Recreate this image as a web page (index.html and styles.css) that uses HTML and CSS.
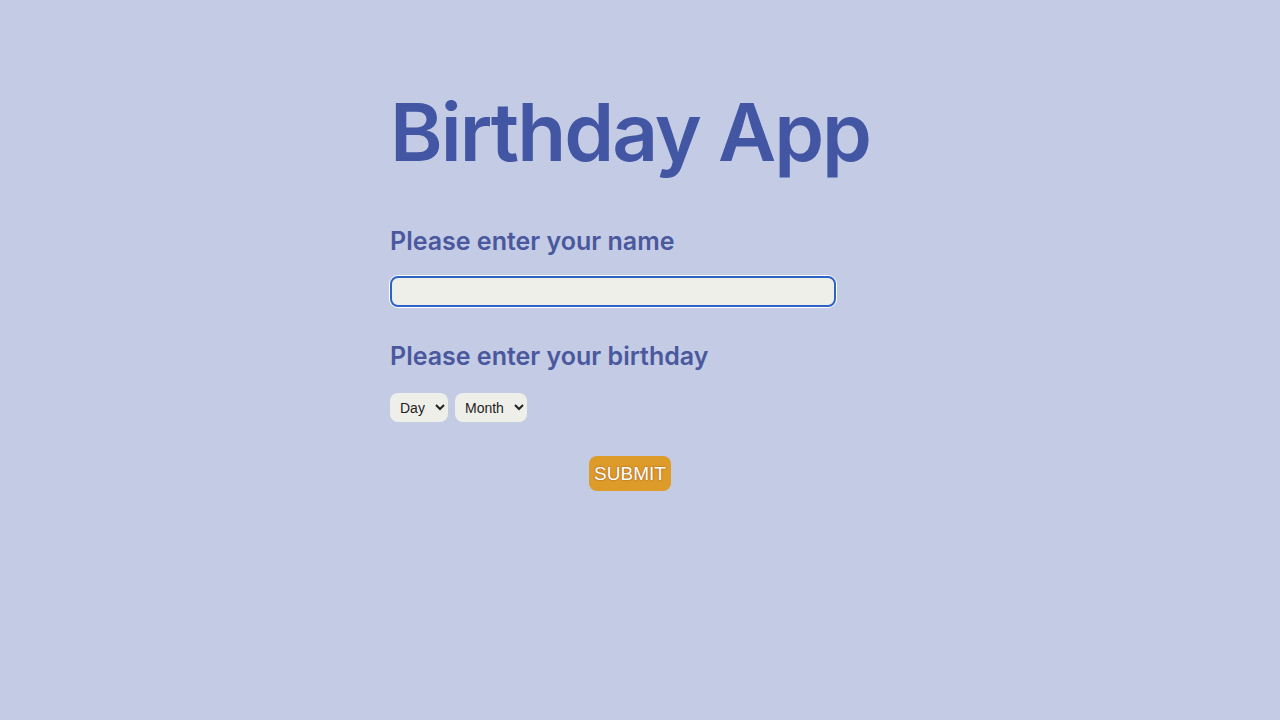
FILE: index.html
```html
<!DOCTYPE html>
<html lang="en">
<head>
<meta charset="utf-8">
<title>Birthday App</title>
<link rel="stylesheet" href="styles.css">
</head>
<body>
<main class="app">
  <h1 class="title">Birthday App</h1>
  <form class="form">
    <label class="label" for="name">Please enter your name</label>
    <input class="name-input" id="name" type="text" autofocus>
    <label class="label label-birthday">Please enter your birthday</label>
    <div class="selects">
      <select class="select"><option>Day</option></select>
      <select class="select"><option>Month</option></select>
    </div>
    <div class="actions">
      <button class="submit" type="button">SUBMIT</button>
    </div>
  </form>
</main>
</body>
</html>
```
FILE: styles.css
```css
html, body {
  margin: 0;
  padding: 0;
}
body {
  background: #c4cbe5;
  min-height: 720px;
  font-family: "Inter", "Noto Sans", sans-serif;
}
.app {
  width: 480px;
  margin: 0 auto;
  padding-top: 82px;
  position: relative;
  left: -10px;
}
.title {
  margin: 0 -20px;
  text-align: center;
  white-space: nowrap;
  font-size: 80px;
  font-weight: 600;
  color: #4356a3;
  line-height: 100px;
  letter-spacing: -2px;
}
.form {
  display: flex;
  flex-direction: column;
  align-items: flex-start;
  margin-top: 44px;
}
.label {
  font-size: 25px;
  font-weight: 600;
  color: #4a589d;
  line-height: 30px;
}
.name-input {
  margin-top: 20px;
  width: 446px;
  height: 31px;
  box-sizing: border-box;
  border: 2px solid #2d62c8;
  border-radius: 8px;
  background: #efefe9;
  box-shadow: 0 0 0 1px #ffffff;
  outline: none;
  font-size: 15px;
  padding: 0 5px;
  caret-color: #333;
}
.label-birthday {
  margin-top: 34px;
}
.selects {
  display: flex;
  gap: 7px;
  margin-top: 22px;
}
.select {
  height: 29px;
  border: none;
  border-radius: 8px;
  background: #efefe9;
  font-family: "Liberation Sans", Arial, sans-serif;
  font-size: 14px;
  color: #222;
  padding: 0 7px 0 6px;
}
.actions {
  align-self: stretch;
  display: flex;
  justify-content: center;
  margin-top: 34px;
}
.submit {
  height: 35px;
  padding: 0 5px;
  border: none;
  border-radius: 8px;
  background: #dd9b2a;
  color: #fff;
  font-family: "Liberation Sans", Arial, sans-serif;
  font-size: 19px;
  text-shadow: 0 0 2px #9a4a20;
}
```
